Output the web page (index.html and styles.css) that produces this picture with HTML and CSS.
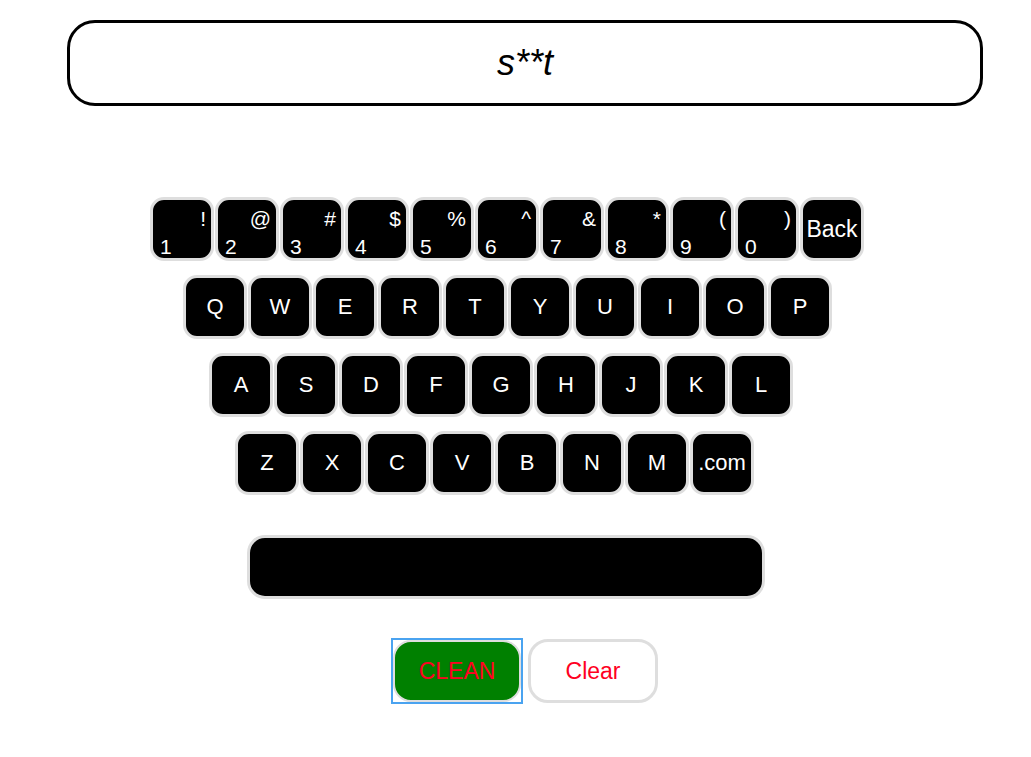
FILE: index.html
```html
<!DOCTYPE html>
<html>
<head>
<meta charset="utf-8">
<link rel="stylesheet" href="styles.css">
</head>
<body>
<div class="display">s**t</div>
<div class="keyboard">
  <div class="row row-num">
    <div class="key dual"><span class="sym">!</span><span class="num">1</span></div>
    <div class="key dual"><span class="sym">@</span><span class="num">2</span></div>
    <div class="key dual"><span class="sym">#</span><span class="num">3</span></div>
    <div class="key dual"><span class="sym">$</span><span class="num">4</span></div>
    <div class="key dual"><span class="sym">%</span><span class="num">5</span></div>
    <div class="key dual"><span class="sym">^</span><span class="num">6</span></div>
    <div class="key dual"><span class="sym">&amp;</span><span class="num">7</span></div>
    <div class="key dual"><span class="sym">*</span><span class="num">8</span></div>
    <div class="key dual"><span class="sym">(</span><span class="num">9</span></div>
    <div class="key dual"><span class="sym">)</span><span class="num">0</span></div>
    <div class="key key-back">Back</div>
  </div>
  <div class="row row-q">
    <div class="key">Q</div><div class="key">W</div><div class="key">E</div><div class="key">R</div><div class="key">T</div><div class="key">Y</div><div class="key">U</div><div class="key">I</div><div class="key">O</div><div class="key">P</div>
  </div>
  <div class="row row-a">
    <div class="key">A</div><div class="key">S</div><div class="key">D</div><div class="key">F</div><div class="key">G</div><div class="key">H</div><div class="key">J</div><div class="key">K</div><div class="key">L</div>
  </div>
  <div class="row row-z">
    <div class="key">Z</div><div class="key">X</div><div class="key">C</div><div class="key">V</div><div class="key">B</div><div class="key">N</div><div class="key">M</div><div class="key">.com</div>
  </div>
  <div class="row row-space">
    <div class="space"></div>
  </div>
</div>
<div class="actions">
  <span class="focus-ring"><button class="btn btn-clean">CLEAN</button></span>
  <button class="btn btn-clear">Clear</button>
</div>
</body>
</html>
```
FILE: styles.css
```css
html, body {
  margin: 0;
  padding: 0;
  background: #fff;
  font-family: "Liberation Sans", Arial, sans-serif;
}

.display {
  box-sizing: border-box;
  margin: 20px 0 0 67px;
  width: 916px;
  height: 86px;
  border: 3px solid #000;
  border-radius: 28px;
  display: flex;
  align-items: center;
  justify-content: center;
  font-size: 36px;
  font-style: italic;
  color: #000;
}

.keyboard {
  margin-top: 91px;
  display: flex;
  flex-direction: column;
  gap: 14px;
}

.row {
  display: flex;
  gap: 1px;
}

.row-num { padding-left: 150px; }
.row-q { padding-left: 183px; }
.row-a { padding-left: 209px; }
.row-z { padding-left: 235px; }
.row-space { padding-left: 247px; margin-top: 26px; }

.key {
  box-sizing: border-box;
  width: 64px;
  height: 64px;
  background: #000;
  border: 3px solid #dedede;
  border-radius: 14px;
  color: #fff;
  font-size: 22px;
  display: flex;
  align-items: center;
  justify-content: center;
}

.key-back {
  font-size: 23px;
  white-space: nowrap;
}

.key.dual {
  flex-direction: column;
  align-items: stretch;
  justify-content: space-between;
  padding: 7px 5px 0 7px;
  font-size: 21px;
  line-height: 23px;
}

.key.dual .sym {
  text-align: right;
}

.key.dual .num {
  text-align: left;
}

.space {
  box-sizing: border-box;
  width: 518px;
  height: 64px;
  background: #000;
  border: 3px solid #dedede;
  border-radius: 18px;
}

.actions {
  margin-top: 39px;
  padding-left: 391px;
  display: flex;
  align-items: center;
  gap: 5px;
}

.focus-ring {
  display: flex;
  border: 2px solid #4aa3f0;
  padding: 0;
}

.btn {
  box-sizing: border-box;
  width: 128px;
  height: 62px;
  border: 2px solid #dedede;
  border-radius: 18px;
  font-family: "Liberation Sans", Arial, sans-serif;
  font-size: 23px;
  color: #ff0022;
  padding: 0;
  margin: 0;
  outline: none;
}

.btn-clean {
  background: #008000;
}

.btn-clear {
  width: 130px;
  height: 64px;
  border-width: 3px;
  background: #fff;
  border-radius: 20px;
}
```
